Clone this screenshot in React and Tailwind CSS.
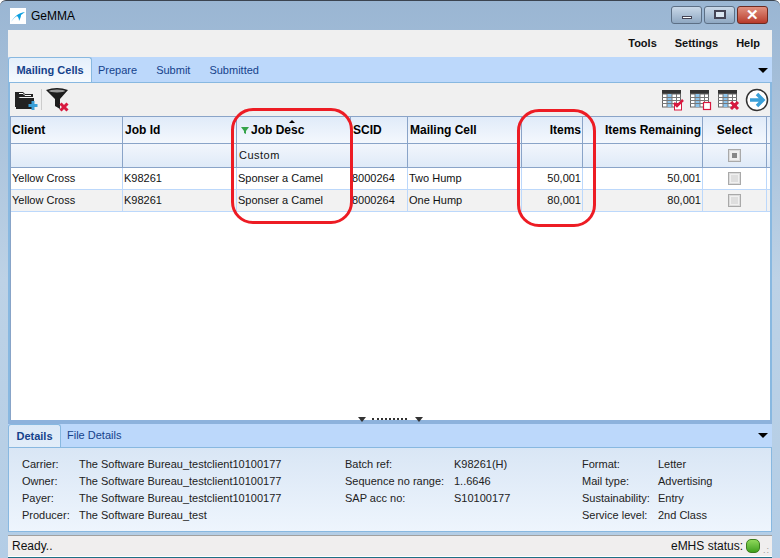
import React from "react";

const font = "font-['Liberation_Sans',sans-serif]";

const columns = [
  { label: "Client", key: "client" },
  { label: "Job Id", key: "job" },
  { label: "Job Desc", key: "desc" },
  { label: "SCID", key: "scid" },
  { label: "Mailing Cell", key: "cell" },
  { label: "Items", key: "items", right: true },
  { label: "Items Remaining", key: "remaining", right: true },
  { label: "Select", key: "select", center: true },
];

const rows = [
  { client: "Yellow Cross", job: "K98261", desc: "Sponser a Camel", scid: "8000264", cell: "Two Hump", items: "50,001", remaining: "50,001" },
  { client: "Yellow Cross", job: "K98261", desc: "Sponser a Camel", scid: "8000264", cell: "One Hump", items: "80,001", remaining: "80,001" },
];

const details = [
  {
    width: "w-[323px]",
    labelWidth: "w-[57px]",
    rows: [
      ["Carrier:", "The Software Bureau_testclient10100177"],
      ["Owner:", "The Software Bureau_testclient10100177"],
      ["Payer:", "The Software Bureau_testclient10100177"],
      ["Producer:", "The Software Bureau_test"],
    ],
  },
  {
    width: "w-[237px]",
    labelWidth: "w-[109px]",
    rows: [
      ["Batch ref:", "K98261(H)"],
      ["Sequence no range:", "1..6646"],
      ["SAP acc no:", "S10100177"],
    ],
  },
  {
    width: "w-[170px]",
    labelWidth: "w-[76px]",
    rows: [
      ["Format:", "Letter"],
      ["Mail type:", "Advertising"],
      ["Sustainability:", "Entry"],
      ["Service level:", "2nd Class"],
    ],
  },
];

const AppLogo = () => (
  <svg width="16" height="16" viewBox="0 0 16 16" className="shrink-0">
    <rect width="16" height="16" fill="#fff" />
    <path d="M1 14 C4 9 8 5 15 4 L11 7 C11 9 10 11 9 13 C9 10 8 9 7 8 C5 9 3 11 1 14Z" fill="#0d9fe0" />
  </svg>
);

const GridIcon = ({ children }) => (
  <svg width="24" height="24" viewBox="0 0 24 24">
    <rect x="1" y="2" width="19" height="4" fill="#333" />
    <rect x="1.5" y="6" width="18" height="13" fill="#fff" stroke="#666" />
    <rect x="6" y="6" width="5" height="13" fill="#8cc4ec" />
    <path d="M6 6v13M11 6v13M15.500 6v13M1 9.500h19M1 12.500h19M1 15.500h19" stroke="#777" strokeWidth="1" fill="none" />
    {children}
  </svg>
);

const FolderAddIcon = () => (
  <svg width="24" height="24" viewBox="0 0 24 24">
    <path d="M1 4 h8 l2 2 h8 v3 H6 L3 11 v8 H1Z" fill="#222" />
    <path d="M3 10 h17 v11 H2 V11Z" fill="#222" />
    <path d="M5 5.500h4 l2 2h6" stroke="#fff" strokeWidth="1" fill="none" />
    <path d="M19 13v9M14.500 17.500h9" stroke="#3a9fd8" strokeWidth="3" />
  </svg>
);

const FunnelClearIcon = () => (
  <svg width="26" height="26" viewBox="0 0 26 26">
    <path d="M1 3 Q12 -1 23 3 L15 12 V22 L10 19 V12Z" fill="#1c1c1c" />
    <ellipse cx="12" cy="4" rx="8" ry="1.500" fill="#999" />
    <path d="M15.500 16.500l7 7M22.500 16.500l-7 7" stroke="#d8193f" strokeWidth="3" />
  </svg>
);

const Checkbox = ({ filled }) => (
  <div className="flex h-[13px] w-[13px] items-center justify-center border border-[#a9a9a9] bg-[#f0f0f0] shadow-[inset_0_0_0_1px_#dcdcdc]">
    <div className={filled ? "h-[5px] w-[5px] bg-[#888]" : "h-[7px] w-[7px] bg-[#dedede]"} />
  </div>
);

const Oval = ({ className }) => (
  <div className={`pointer-events-none absolute rounded-[22px] border-[3px] border-[#ed1c24] ${className}`} />
);

const colsClass = "grid grid-cols-[112px_114px_114px_57px_114px_61px_120px_64px]";

export default function App() {
  return (
    <div className={`${font} relative flex h-[558px] w-[780px] flex-col overflow-hidden rounded-t-[6px] border-t border-[#3b4450] bg-gradient-to-b from-[#9ab6d3] via-[#bdd2e6] to-[#b3cde6] px-2 text-[11px] text-[#111]`}>
      {/* title bar */}
      <div className="flex h-[29px] shrink-0 items-center">
        <div className="ml-[2px] flex items-center gap-[5px]">
          <AppLogo />
          <span className="text-[12px] text-black">GeMMA</span>
        </div>
        <div className="ml-auto flex h-[18px] -translate-y-[1px] gap-[2px]">
          <div className="flex w-[31px] items-end justify-center rounded-[3px] border border-[#5c6f85] bg-gradient-to-b from-[#c9d8e8] to-[#8fa8c2] pb-[4px]">
            <div className="h-[3px] w-[10px] border border-[#445] bg-white" />
          </div>
          <div className="flex w-[31px] items-center justify-center rounded-[3px] border border-[#5c6f85] bg-gradient-to-b from-[#c9d8e8] to-[#8fa8c2]">
            <div className="flex h-[9px] w-[12px] items-center justify-center border-2 border-[#445] bg-[#dbe6f1]" />
          </div>
          <div className="flex w-[31px] items-center justify-center rounded-[3px] border border-[#6e2a20] bg-gradient-to-b from-[#e0907f] to-[#b83a2b] text-[15px] leading-none font-bold text-white">
            ✕
          </div>
        </div>
        <div className="w-[4px]" />
      </div>

      {/* menu bar */}
      <div className="flex h-[27px] shrink-0 items-center justify-end gap-[18px] bg-[#f0f0f0] pr-[12px] font-bold">
        <span>Tools</span>
        <span>Settings</span>
        <span>Help</span>
      </div>

      {/* main tabs */}
      <div className="flex h-[25px] shrink-0 items-end bg-[#bcd8fb]">
        <div className="flex h-[25px] w-[84px] items-center justify-center rounded-t-[3px] border-x border-t border-[#88b8e0] bg-gradient-to-b from-[#e4effb] to-[#f6fafe] font-bold text-[#15428b]">
          Mailing Cells
        </div>
        <div className="flex h-[24px] items-center gap-[19px] pl-[6px] text-[#15428b]">
          <span>Prepare</span>
          <span>Submit</span>
          <span>Submitted</span>
        </div>
        <div className="mr-[4px] mb-[9px] ml-auto h-0 w-0 border-x-[5px] border-t-[5px] border-x-transparent border-t-black" />
      </div>

      {/* tab body */}
      <div className="flex min-h-0 flex-1 flex-col border-x-2 border-t border-x-[#88b8e0] border-t-[#88b8e0] bg-[#f0f0f0]">
        {/* toolbar */}
        <div className="flex h-[33px] shrink-0 items-center pl-[4px]">
          <FolderAddIcon />
          <div className="mx-[3px] h-[21px] w-px bg-[#ccc]" />
          <FunnelClearIcon />
          <div className="ml-auto flex items-center gap-[4px] pr-[1px]">
            <GridIcon>
              <rect x="13.500" y="15.500" width="7" height="6.500" fill="#fff" stroke="#d8193f" />
              <path d="M13 15l3 3 6-6" stroke="#d8193f" strokeWidth="2.500" fill="none" />
            </GridIcon>
            <GridIcon>
              <rect x="14.500" y="14.500" width="7" height="7" fill="#fff" stroke="#d8193f" strokeWidth="1.200" />
            </GridIcon>
            <GridIcon>
              <path d="M14 14l7 7M21 14l-7 7" stroke="#d8193f" strokeWidth="3" />
            </GridIcon>
            <svg width="24" height="24" viewBox="0 0 24 24">
              <circle cx="12" cy="12" r="10.500" fill="#fff" stroke="#333" strokeWidth="1.500" />
              <path d="M5 12h12M12 6l6 6-6 6" stroke="#3a9fd8" strokeWidth="3.500" fill="none" />
            </svg>
          </div>
        </div>

        {/* grid */}
        <div className="flex min-h-0 flex-1 flex-col overflow-hidden border-l border-[#88a4c8] bg-white">
          <div className={`${colsClass} h-[28px] shrink-0 border-y border-[#8aa4c8] bg-gradient-to-b from-[#e0ebf9] to-[#f4f8fd] text-[12px] font-bold text-black`}>
            {columns.map((col, i) => (
              <div
                key={col.key}
                className={`relative flex items-center border-r border-[#8aa4c8] px-[1px] ${col.right ? "justify-end" : col.center ? "justify-center" : i > 0 ? "pl-[2px]" : ""}`}
              >
                {col.key === "desc" && (
                  <>
                    <div className="absolute top-[3px] left-[52px] h-0 w-0 border-x-[3px] border-b-[3px] border-x-transparent border-b-black" />
                    <svg width="10" height="9" viewBox="0 0 10 9" className="mr-[1px] ml-[1px] shrink-0">
                      <path d="M1 1h8L6 5v3L4 7V5Z" fill="#35a34a" />
                    </svg>
                  </>
                )}
                {col.label}
              </div>
            ))}
          </div>
          <div className={`${colsClass} h-[24px] shrink-0 border-b border-[#8aa4c8] bg-gradient-to-b from-[#f2f6fc] to-[#dfeaf8]`}>
            {columns.map((col) => (
              <div key={col.key} className="flex items-center justify-center border-r border-[#8aa4c8]">
                {col.key === "desc" && <span className="w-full pl-[2px] tracking-[0.5px]">Custom</span>}
                {col.key === "select" && <Checkbox filled />}
              </div>
            ))}
          </div>
          {rows.map((row, n) => (
            <div key={n} className={`${colsClass} h-[22px] shrink-0 border-b border-[#bcd8fb] ${n % 2 ? "bg-[#f2f2f2]" : "bg-white"}`}>
              {columns.map((col) => (
                <div
                  key={col.key}
                  className={`flex items-center border-r border-[#bcd8fb] px-[1px] ${col.right ? "justify-end" : col.center ? "justify-center" : ""}`}
                >
                  {col.key === "select" ? <Checkbox /> : row[col.key]}
                </div>
              ))}
            </div>
          ))}
        </div>
      </div>

      {/* splitter */}
      <div className="relative h-[4px] shrink-0 bg-[#8db2dc]">
        <div className="absolute -top-[3px] left-[350px] h-0 w-0 border-x-[4px] border-t-[5px] border-x-transparent border-t-[#333]" />
        <div className="absolute -top-[2px] left-[364px] h-[2px] w-[35px] border-t-2 border-dotted border-[#333]" />
        <div className="absolute -top-[3px] left-[407px] h-0 w-0 border-x-[4px] border-t-[5px] border-x-transparent border-t-[#333]" />
      </div>

      {/* details tabs */}
      <div className="flex h-[23px] shrink-0 items-end bg-[#bcd8fb]">
        <div className="flex h-[23px] w-[53px] items-center justify-center rounded-t-[3px] border-x border-t border-[#88b8e0] bg-gradient-to-b from-[#dce9f7] to-[#e2edf9] font-bold text-[#15428b]">
          Details
        </div>
        <span className="mb-[4px] pl-[6px] text-[#15428b]">File Details</span>
        <div className="mr-[4px] mb-[9px] ml-auto h-0 w-0 border-x-[5px] border-t-[5px] border-x-transparent border-t-black" />
      </div>

      {/* details body */}
      <div className="flex h-[85px] shrink-0 border border-[#88b8e0] bg-gradient-to-b from-[#d9e6f5] to-[#eef5fd] pt-[8px] pl-[13px] text-[#222]">
        {details.map((group, g) => (
          <div key={g} className={`${group.width} flex shrink-0 flex-col`}>
            {group.rows.map(([label, value]) => (
              <div key={label} className="flex h-[17px] items-center">
                <span className={`${group.labelWidth} shrink-0`}>{label}</span>
                <span>{value}</span>
              </div>
            ))}
          </div>
        ))}
      </div>

      {/* status bar */}
      <div className="mt-[3px] flex h-[21px] shrink-0 items-center border-t border-[#a0a0a0] bg-[#f0eeee] pr-[2px] pl-[4px] text-[12px]">
        <span>Ready..</span>
        <span className="ml-auto">eMHS status:</span>
        <div className="mx-[3px] h-[14px] w-[14px] rounded-[5px] border border-[#3c7d1e] bg-gradient-to-b from-[#8ed85a] to-[#3fa01c]" />
        <span className="self-end text-[9px] leading-[12px] tracking-[1px] text-[#999]">.:</span>
      </div>
      <div className="h-px shrink-0 bg-white" />
      <div className="h-px shrink-0 bg-[#1d6f86]" />

      <Oval className="top-[107px] left-[231px] h-[116px] w-[122px]" />
      <Oval className="top-[108px] left-[517px] h-[118px] w-[79px]" />
    </div>
  );
}
